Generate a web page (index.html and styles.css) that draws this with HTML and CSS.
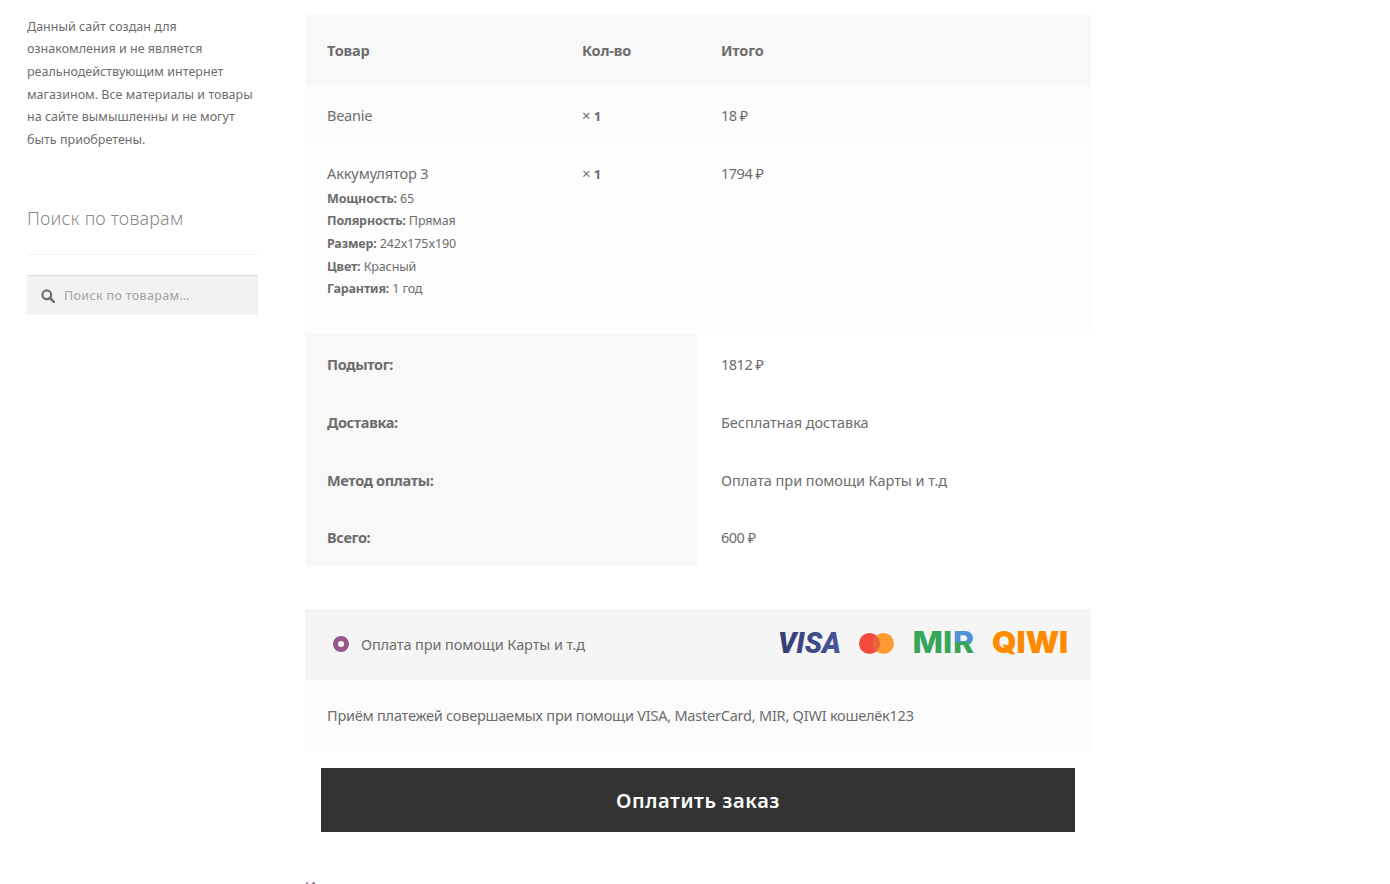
FILE: index.html
```html
<!DOCTYPE html>
<html lang="ru">
<head>
<meta charset="utf-8">
<title>Оплатить заказ</title>
<link rel="stylesheet" href="styles.css">
</head>
<body>
<div class="page">
  <aside class="sidebar">
    <p class="about">Данный сайт создан для ознакомления и не является реальнодействующим интернет магазином. Все материалы и товары на сайте вымышленны и не могут быть приобретены.</p>
    <h2 class="widget-title">Поиск по товарам</h2>
    <div class="search">
      <svg class="search-icon" viewBox="0 0 14 14" width="14" height="14"><circle cx="5.8" cy="5.8" r="4.4" fill="none" stroke="#6d6d6d" stroke-width="2.2"/><path d="M9 9l3.8 3.8" stroke="#6d6d6d" stroke-width="2.6" stroke-linecap="round"/></svg>
      <span class="placeholder">Поиск по товарам…</span>
    </div>
  </aside>
  <main class="main">
    <table class="order">
      <thead>
        <tr><th class="c1">Товар</th><th class="c2">Кол-во</th><th class="c3">Итого</th></tr>
      </thead>
      <tbody>
        <tr class="row-a"><td class="latin">Beanie</td><td><span class="qty"><span class="times">×</span> 1</span></td><td class="num">18 ₽</td></tr>
        <tr class="row-b">
          <td><span class="name">Аккумулятор 3</span>
            <ul class="meta">
              <li><b>Мощность:</b> 65</li>
              <li><b>Полярность:</b> Прямая</li>
              <li><b>Размер:</b> 242x175x190</li>
              <li><b>Цвет:</b> Красный</li>
              <li><b>Гарантия:</b> 1 год</li>
            </ul>
          </td>
          <td><span class="qty"><span class="times">×</span> 1</span></td><td class="num">1794 ₽</td>
        </tr>
      </tbody>
      <tfoot>
        <tr><th colspan="2">Подытог:</th><td class="num">1812 ₽</td></tr>
        <tr><th colspan="2">Доставка:</th><td>Бесплатная доставка</td></tr>
        <tr><th colspan="2">Метод оплаты:</th><td>Оплата при помощи Карты и т.д</td></tr>
        <tr class="last"><th colspan="2">Всего:</th><td class="num">600 ₽</td></tr>
      </tfoot>
    </table>
    <section class="payment">
      <div class="pay-head">
        <span class="radio"></span>
        <span class="pay-label">Оплата при помощи Карты и т.д</span>
        <svg class="logos" viewBox="0 0 292 30" width="292" height="30">
          <defs>
            <linearGradient id="visag" x1="0" y1="0" x2="1" y2="0">
              <stop offset="0" stop-color="#323e6e"/><stop offset="1" stop-color="#46579c"/>
            </linearGradient>
            <linearGradient id="mirg" x1="0" y1="0" x2="0" y2="1">
              <stop offset="0.5" stop-color="#4f92d6"/><stop offset="0.5" stop-color="#37a65a"/>
            </linearGradient>
          </defs>
          <text class="l-visa" x="1" y="23" textLength="63" lengthAdjust="spacingAndGlyphs">VISA</text>
          <circle cx="92.5" cy="13.5" r="10.5" fill="#f4493f"/>
          <circle cx="106.5" cy="13.5" r="10.5" fill="#ff9a33"/>
          <path d="M99.5 5.7a10.5 10.5 0 0 1 0 15.6a10.5 10.5 0 0 1 0-15.6z" fill="#e9653a"/>
          <text class="l-mir" x="135.5" y="23" textLength="39.5" lengthAdjust="spacingAndGlyphs">MI</text>
          <text class="l-mir l-r" x="176" y="23" textLength="21" lengthAdjust="spacingAndGlyphs">R</text>
          <text class="l-qiwi" x="215" y="23" textLength="76" lengthAdjust="spacingAndGlyphs">QIWI</text>
        </svg>
      </div>
      <div class="pay-body">Приём платежей совершаемых при помощи VISA, MasterCard, MIR, QIWI кошелёк123</div>
    </section>
    <button class="pay-btn" type="button">Оплатить заказ</button>
    <p class="cut">И</p>
  </main>
</div>
</body>
</html>
```

FILE: styles.css
```css
* { box-sizing: border-box; }
html, body { margin: 0; padding: 0; height: 884px; overflow: hidden; background: #fff; }
body { font-family: "Noto Sans", "Open Sans", sans-serif; color: #6d6d6d; font-size: 14.5px; letter-spacing: -0.1px; }
.page { display: flex; align-items: flex-start; padding: 15px 0 0 27px; gap: 47px; }
.sidebar { width: 231px; flex: none; padding-top: 0.8px; }
.about { margin: 0; font-size: 12.5px; line-height: 22.65px; letter-spacing: 0.02px; color: #6d6d6d; }
.widget-title { margin: 54.3px 0 0; padding-bottom: 23px; border-bottom: 1px solid #f0f0f0; font-size: 18px; font-weight: 300; line-height: 24px; color: #8a8a8a; letter-spacing: 0.2px; height: 49px; }
.search { margin-top: 20px; height: 40px; background: #f2f2f2; border-top: 1px solid #dcdcdc; display: flex; align-items: center; padding-left: 14px; gap: 9px; }
.placeholder { font-size: 12.5px; color: #a3a3a3; letter-spacing: 0.35px; }
.main { width: 786px; flex: none; }
.order { width: 786px; border-collapse: collapse; table-layout: fixed; }
.c1 { width: 255px; } .c2 { width: 138px; } .c3 { width: 393px; }
.order th, .order td { padding: 0 22px; text-align: left; vertical-align: middle; font-size: 14.5px; }
.order th { font-weight: 700; color: #6d6d6d; letter-spacing: -0.33px; }
.order thead th { height: 71px; background: #f8f8f8; padding-bottom: 2px; letter-spacing: -0.15px; }
.order thead .c3, .row-a td:last-child, .row-b td:last-child { padding-left: 23px; }
.row-a td { height: 58px; background: #fcfcfc; }
.row-b td { height: 190px; background: #fdfdfd; vertical-align: top; padding-top: 18px; line-height: 22px; }
.order td.latin { letter-spacing: -0.25px; }
.order td.num { letter-spacing: -0.5px; }
.name { letter-spacing: -0.1px; }
.qty { font-weight: 700; font-size: 13px; color: #6d6d6d; }
.times { font-weight: 400; font-size: 15px; }
.meta { list-style: none; margin: 3.8px 0 0; padding: 0; font-size: 12.5px; line-height: 22.65px; letter-spacing: -0.13px; }
.meta b { color: #6d6d6d; }
.order tfoot th { background: #f8f8f8; height: 58px; padding-top: 2px; }
.order tfoot td { background: #fff; height: 58px; padding-left: 23px; padding-top: 2px; letter-spacing: -0.03px; }
.order tfoot .last th, .order tfoot .last td { height: 59px; padding-top: 0; padding-bottom: 1px; }
.payment { margin-top: 42px; }
.pay-head { height: 71px; background: #f5f5f5; display: flex; align-items: center; padding: 0 22px 0 28px; }
.radio { width: 16px; height: 16px; border-radius: 50%; border: 5px solid #96588a; background: #fff; flex: none; margin-bottom: 2px; }
.pay-label { margin-left: 12px; flex: 1; padding-bottom: 2px; }
.logos { flex: none; overflow: visible; }
.l-visa { font-family: Roboto, "Liberation Sans", sans-serif; font-style: italic; font-weight: 900; font-size: 30px; fill: url(#visag); }
.l-mir { font-family: Inter, "Liberation Sans", sans-serif; font-weight: 800; font-size: 30px; fill: #37a65a; }
.l-r { fill: url(#mirg); }
.l-qiwi { font-family: Inter, "Liberation Sans", sans-serif; font-weight: 900; font-size: 30px; fill: #ff8c00; }
.pay-body { height: 72px; background: #fbfbfb; display: flex; align-items: center; padding: 0 22px 2px; letter-spacing: -0.22px; }
.pay-btn { display: block; width: 754px; height: 64px; margin: 16px 0 0 16px; border: 0; background: #333; color: #fff; font-family: "Noto Sans", sans-serif; font-size: 20px; font-weight: 600; letter-spacing: 0.6px; }
.cut { margin: 43px 0 0; font-size: 14.5px; line-height: 22px; color: #96588a; }
```
